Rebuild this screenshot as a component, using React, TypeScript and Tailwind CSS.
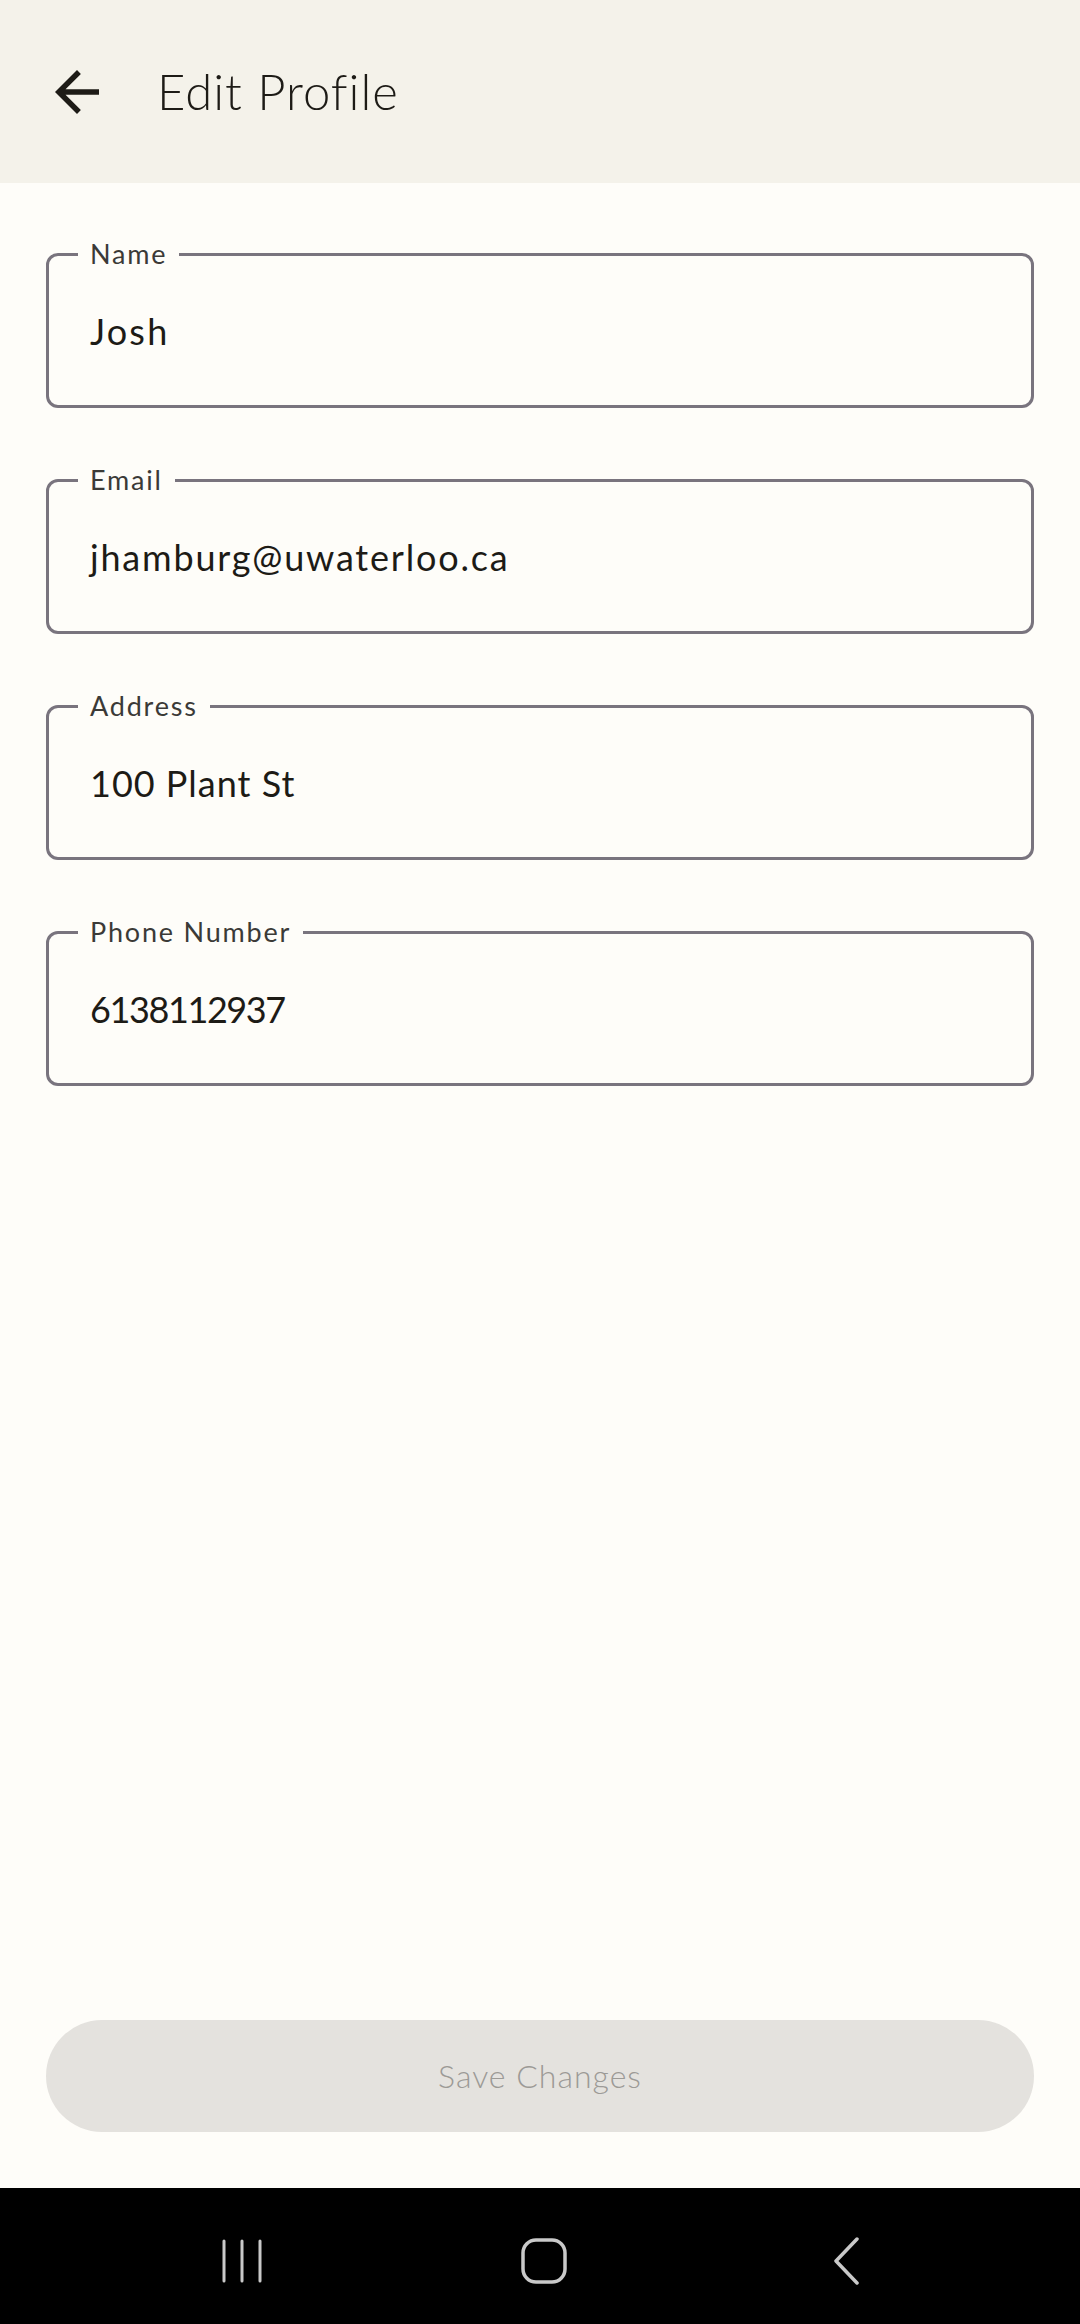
import React from "react";

const fields = [
  { label: "Name", value: "Josh", track: "tracking-[2.2px]" },
  { label: "Email", value: "jhamburg@uwaterloo.ca", track: "tracking-[1.8px]" },
  { label: "Address", value: "100 Plant St", track: "tracking-[1px]" },
  { label: "Phone Number", value: "6138112937", track: "tracking-[-1.4px]" },
];

function Field({ label, value, track }: { label: string; value: string; track: string }) {
  return (
    <div className="relative h-[155px] rounded-[12px] border-[3px] border-[#79747e] flex items-center pl-[41px]">
      <span className="absolute left-[29px] top-[-20px] bg-[#fefdf9] px-[12px] text-[27px] leading-[36px] tracking-[1.8px] text-[#3b3a37]">
        {label}
      </span>
      <span className={`text-[36px] text-[#1d1b16] ${track}`}>{value}</span>
    </div>
  );
}

export default function App() {
  return (
    <div
      className="w-[1080px] h-[2324px] flex flex-col bg-[#fefdf9]"
      style={{ fontFamily: "Lato, 'Noto Sans', sans-serif" }}
    >
      <header className="h-[183px] bg-[#f4f2ea] flex items-center pl-[44px]">
        <svg width="66" height="66" viewBox="0 0 24 24" className="shrink-0">
          <path
            d="M20 11H7.83l5.59-5.59L12 4l-8 8 8 8 1.41-1.41L7.83 13H20v-2z"
            fill="#1d1b16"
          />
        </svg>
        <h1 className="ml-[47px] text-[49px] text-[#1d1b16] font-light tracking-[1px]">Edit Profile</h1>
      </header>

      <main className="flex-1 flex flex-col px-[46px] pt-[70px] pb-[56px]">
        <div className="flex flex-col gap-[71px]">
          {fields.map((f) => (
            <Field key={f.label} label={f.label} value={f.value} track={f.track} />
          ))}
        </div>
        <div className="flex-1" />
        <button className="h-[112px] w-full rounded-full bg-[#e4e2de] text-[32px] text-[#9c9a96] font-light tracking-[1px]">
          Save Changes
        </button>
      </main>

      <nav className="h-[136px] bg-black flex items-center pl-[192px] gap-[202px] pt-[10px]">
        <div className="w-[100px] flex justify-center">
          <svg width="44" height="44" viewBox="0 0 44 44">
            <line x1="4" y1="2" x2="4" y2="42" stroke="#c9c9c9" strokeWidth="3" strokeLinecap="round" />
            <line x1="22" y1="2" x2="22" y2="42" stroke="#c9c9c9" strokeWidth="3" strokeLinecap="round" />
            <line x1="40" y1="2" x2="40" y2="42" stroke="#c9c9c9" strokeWidth="3" strokeLinecap="round" />
          </svg>
        </div>
        <div className="w-[100px] flex justify-center">
          <svg width="46" height="46" viewBox="0 0 46 46">
            <rect x="2" y="2" width="42" height="42" rx="13" fill="none" stroke="#c9c9c9" strokeWidth="3.5" />
          </svg>
        </div>
        <div className="w-[100px] flex justify-center">
          <svg width="28" height="48" viewBox="0 0 28 48">
            <polyline points="25,2 4,24 25,46" fill="none" stroke="#c9c9c9" strokeWidth="3.5" strokeLinecap="round" strokeLinejoin="round" />
          </svg>
        </div>
      </nav>
    </div>
  );
}
